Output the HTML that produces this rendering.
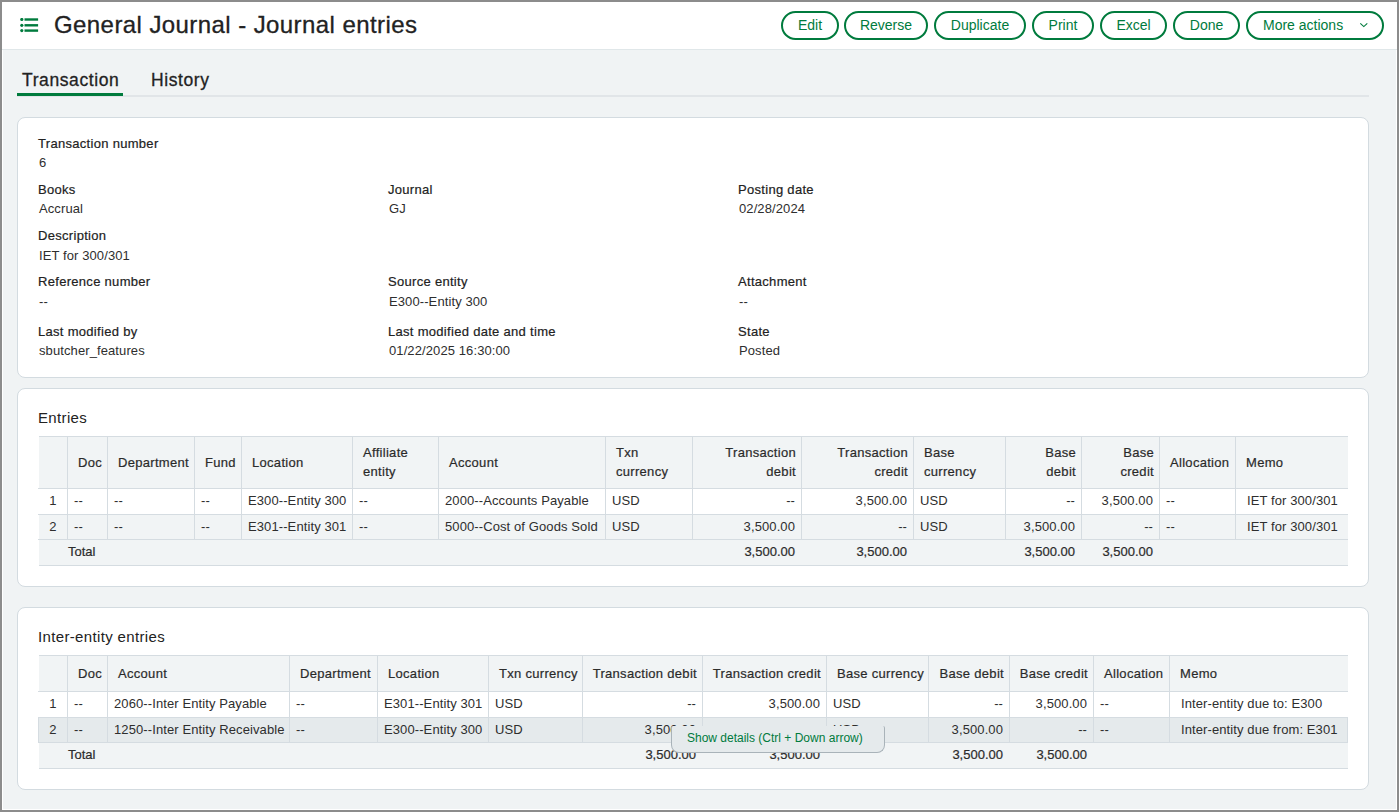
<!DOCTYPE html>
<html><head><meta charset="utf-8">
<style>
*{box-sizing:border-box;margin:0;padding:0}
html,body{width:1399px;height:812px;overflow:hidden}
body{font-family:"Liberation Sans",sans-serif;color:#222;background:#8c8c8c;position:relative;font-size:13px}
.a{position:absolute;white-space:nowrap}
#frame{position:absolute;left:2px;top:2px;width:1395px;height:808px;background:#fff}
#page{position:absolute;left:3px;top:2px;width:1393px;height:807px;background:#f0f3f4}
#hdr{position:absolute;left:2px;top:2px;width:1395px;height:48px;background:#fff;border-bottom:1px solid #e0e7e9}
.title{left:54px;top:11px;font-size:24px;line-height:28px;color:#222;letter-spacing:0.42px;-webkit-text-stroke:0.3px #222}
.btn{position:absolute;top:11px;height:29px;border:2px solid #007b3d;border-radius:15px;color:#007b3d;font-size:14px;line-height:25px;text-align:center;white-space:nowrap;background:#fff}
.tab{position:absolute;top:70px;font-size:17.5px;line-height:20px;color:#222;-webkit-text-stroke:0.3px #222;white-space:nowrap;letter-spacing:0.6px}
.card{position:absolute;left:17px;width:1352px;background:#fff;border:1px solid #d3dbe0;border-radius:8px}
.l{position:absolute;font-size:13px;line-height:15px;color:#222;-webkit-text-stroke:0.2px #222;white-space:nowrap;letter-spacing:0.3px}
.v{position:absolute;font-size:13px;line-height:15px;color:#2e2e2e;white-space:nowrap;letter-spacing:0.1px}
.sec{position:absolute;font-size:15px;line-height:17px;color:#222;white-space:nowrap;letter-spacing:0.35px}
.ln{position:absolute;background:#d5dce1}
.bg{position:absolute}
.t{position:absolute;font-size:13px;line-height:15px;color:#2e2e2e;white-space:nowrap;letter-spacing:0.1px}
.th{-webkit-text-stroke:0.2px #222;letter-spacing:0.3px}
.tt{-webkit-text-stroke:0.2px #222;letter-spacing:0px}
</style></head><body>
<div id="frame"></div><div id="page"></div><div id="hdr"></div>
<svg class="a" style="left:20px;top:18px" width="19" height="15" viewBox="0 0 19 15"><g fill="#007b3d"><circle cx="1.8" cy="1.5" r="1.6"/><circle cx="1.8" cy="7.3" r="1.6"/><circle cx="1.8" cy="12.6" r="1.6"/><rect x="4.5" y="0.3" width="13.6" height="2.4"/><rect x="4.5" y="6.1" width="13.6" height="2.4"/><rect x="4.5" y="11.4" width="13.6" height="2.4"/></g></svg>
<div class="a title">General Journal - Journal entries</div>
<div class="btn" style="left:781px;width:58px">Edit</div>
<div class="btn" style="left:844px;width:84px">Reverse</div>
<div class="btn" style="left:934px;width:92px">Duplicate</div>
<div class="btn" style="left:1032px;width:62px">Print</div>
<div class="btn" style="left:1100px;width:67px">Excel</div>
<div class="btn" style="left:1173px;width:67px">Done</div>
<div class="btn" style="left:1246px;width:138px;text-align:left;padding-left:15px">More actions</div>
<svg class="a" style="left:1359px;top:22px" width="10" height="6" viewBox="0 0 10 6"><path d="M1.3 1.3 L4.8 4.6 L8.3 1.3" fill="none" stroke="#007b3d" stroke-width="1.1"/></svg>
<div class="a" style="left:17px;top:95px;width:1352px;height:2px;background:#e1e5e8"></div>
<div class="a" style="left:17px;top:93px;width:106px;height:3px;background:#007b3d"></div>
<div class="tab" style="left:22px">Transaction</div>
<div class="tab" style="left:151px">History</div>
<div class="card" style="top:117px;height:261px"></div>
<div class="l" style="left:38px;top:136px">Transaction number</div>
<div class="v" style="left:39px;top:154.5px">6</div>
<div class="l" style="left:38px;top:182px">Books</div>
<div class="v" style="left:39px;top:201px">Accrual</div>
<div class="l" style="left:388px;top:182px">Journal</div>
<div class="v" style="left:389px;top:201px">GJ</div>
<div class="l" style="left:738px;top:182px">Posting date</div>
<div class="v" style="left:739px;top:201px">02/28/2024</div>
<div class="l" style="left:38px;top:228px">Description</div>
<div class="v" style="left:39px;top:247.5px">IET for 300/301</div>
<div class="l" style="left:38px;top:274px">Reference number</div>
<div class="v" style="left:39px;top:293.5px">--</div>
<div class="l" style="left:388px;top:274px">Source entity</div>
<div class="v" style="left:389px;top:293.5px">E300--Entity 300</div>
<div class="l" style="left:738px;top:274px">Attachment</div>
<div class="v" style="left:739px;top:293.5px">--</div>
<div class="l" style="left:38px;top:324px">Last modified by</div>
<div class="v" style="left:39px;top:343px">sbutcher_features</div>
<div class="l" style="left:388px;top:324px">Last modified date and time</div>
<div class="v" style="left:389px;top:343px">01/22/2025 16:30:00</div>
<div class="l" style="left:738px;top:324px">State</div>
<div class="v" style="left:739px;top:343px">Posted</div>
<div class="card" style="top:388px;height:199px"></div>
<div class="sec" style="left:38px;top:409px">Entries</div>
<div class="bg" style="left:39px;top:436px;width:1309px;height:52px;background:#f1f4f5"></div>
<div class="bg" style="left:39px;top:488px;width:1309px;height:26px;background:#fff"></div>
<div class="bg" style="left:39px;top:514px;width:1309px;height:25px;background:#f1f4f5"></div>
<div class="bg" style="left:39px;top:539px;width:1309px;height:26px;background:#f1f4f5"></div>
<div class="ln" style="left:39px;top:436px;width:1309px;height:1px"></div>
<div class="ln" style="left:38px;top:488px;width:1310px;height:1px"></div>
<div class="ln" style="left:38px;top:514px;width:1310px;height:1px"></div>
<div class="ln" style="left:38px;top:539px;width:1310px;height:1px"></div>
<div class="ln" style="left:39px;top:565px;width:1309px;height:1px"></div>
<div class="ln" style="left:67px;top:436px;width:1px;height:103px"></div>
<div class="ln" style="left:107px;top:436px;width:1px;height:103px"></div>
<div class="ln" style="left:194px;top:436px;width:1px;height:103px"></div>
<div class="ln" style="left:241px;top:436px;width:1px;height:103px"></div>
<div class="ln" style="left:352px;top:436px;width:1px;height:103px"></div>
<div class="ln" style="left:438px;top:436px;width:1px;height:103px"></div>
<div class="ln" style="left:605px;top:436px;width:1px;height:103px"></div>
<div class="ln" style="left:692px;top:436px;width:1px;height:103px"></div>
<div class="ln" style="left:801px;top:436px;width:1px;height:103px"></div>
<div class="ln" style="left:913px;top:436px;width:1px;height:103px"></div>
<div class="ln" style="left:1005px;top:436px;width:1px;height:103px"></div>
<div class="ln" style="left:1081px;top:436px;width:1px;height:103px"></div>
<div class="ln" style="left:1159px;top:436px;width:1px;height:103px"></div>
<div class="ln" style="left:1235px;top:436px;width:1px;height:103px"></div>
<div class="t th" style="left:78px;top:455.0px">Doc</div>
<div class="t th" style="left:118px;top:455.0px">Department</div>
<div class="t th" style="left:205px;top:455.0px">Fund</div>
<div class="t th" style="left:252px;top:455.0px">Location</div>
<div class="t th" style="left:363px;top:444.5px">Affiliate</div>
<div class="t th" style="left:363px;top:463.5px">entity</div>
<div class="t th" style="left:449px;top:455.0px">Account</div>
<div class="t th" style="left:616px;top:444.5px">Txn</div>
<div class="t th" style="left:616px;top:463.5px">currency</div>
<div class="t th" style="right:603px;top:444.5px;text-align:right">Transaction</div>
<div class="t th" style="right:603px;top:463.5px;text-align:right">debit</div>
<div class="t th" style="right:491px;top:444.5px;text-align:right">Transaction</div>
<div class="t th" style="right:491px;top:463.5px;text-align:right">credit</div>
<div class="t th" style="left:924px;top:444.5px">Base</div>
<div class="t th" style="left:924px;top:463.5px">currency</div>
<div class="t th" style="right:323px;top:444.5px;text-align:right">Base</div>
<div class="t th" style="right:323px;top:463.5px;text-align:right">debit</div>
<div class="t th" style="right:245px;top:444.5px;text-align:right">Base</div>
<div class="t th" style="right:245px;top:463.5px;text-align:right">credit</div>
<div class="t th" style="left:1170px;top:455.0px">Allocation</div>
<div class="t th" style="left:1246px;top:455.0px">Memo</div>
<div class="t" style="left:39px;width:28px;top:493.0px;text-align:center">1</div>
<div class="t" style="left:74px;top:493.0px">--</div>
<div class="t" style="left:114px;top:493.0px">--</div>
<div class="t" style="left:201px;top:493.0px">--</div>
<div class="t" style="left:248px;top:493.0px">E300--Entity 300</div>
<div class="t" style="left:359px;top:493.0px">--</div>
<div class="t" style="left:445px;top:493.0px">2000--Accounts Payable</div>
<div class="t" style="left:612px;top:493.0px">USD</div>
<div class="t" style="right:604px;top:493.0px;text-align:right">--</div>
<div class="t" style="right:492px;top:493.0px;text-align:right">3,500.00</div>
<div class="t" style="left:920px;top:493.0px">USD</div>
<div class="t" style="right:324px;top:493.0px;text-align:right">--</div>
<div class="t" style="right:246px;top:493.0px;text-align:right">3,500.00</div>
<div class="t" style="left:1166px;top:493.0px">--</div>
<div class="t" style="left:1247px;top:493.0px">IET for 300/301</div>
<div class="t" style="left:39px;width:28px;top:518.5px;text-align:center">2</div>
<div class="t" style="left:74px;top:518.5px">--</div>
<div class="t" style="left:114px;top:518.5px">--</div>
<div class="t" style="left:201px;top:518.5px">--</div>
<div class="t" style="left:248px;top:518.5px">E301--Entity 301</div>
<div class="t" style="left:359px;top:518.5px">--</div>
<div class="t" style="left:445px;top:518.5px">5000--Cost of Goods Sold</div>
<div class="t" style="left:612px;top:518.5px">USD</div>
<div class="t" style="right:604px;top:518.5px;text-align:right">3,500.00</div>
<div class="t" style="right:492px;top:518.5px;text-align:right">--</div>
<div class="t" style="left:920px;top:518.5px">USD</div>
<div class="t" style="right:324px;top:518.5px;text-align:right">3,500.00</div>
<div class="t" style="right:246px;top:518.5px;text-align:right">--</div>
<div class="t" style="left:1166px;top:518.5px">--</div>
<div class="t" style="left:1247px;top:518.5px">IET for 300/301</div>
<div class="t tt" style="left:68px;top:544.0px">Total</div>
<div class="t tt" style="right:604px;top:544.0px;text-align:right">3,500.00</div>
<div class="t tt" style="right:492px;top:544.0px;text-align:right">3,500.00</div>
<div class="t tt" style="right:324px;top:544.0px;text-align:right">3,500.00</div>
<div class="t tt" style="right:246px;top:544.0px;text-align:right">3,500.00</div>
<div class="card" style="top:607px;height:183px"></div>
<div class="sec" style="left:38px;top:628px">Inter-entity entries</div>
<div class="bg" style="left:39px;top:655px;width:1309px;height:36px;background:#f1f4f5"></div>
<div class="bg" style="left:39px;top:691px;width:1309px;height:26px;background:#fff"></div>
<div class="bg" style="left:38px;top:717px;width:1310px;height:26px;background:#e5eaec;border:1px solid #d5dce1"></div>
<div class="bg" style="left:39px;top:742px;width:1309px;height:26px;background:#f1f4f5"></div>
<div class="ln" style="left:39px;top:655px;width:1309px;height:1px"></div>
<div class="ln" style="left:38px;top:691px;width:1310px;height:1px"></div>
<div class="ln" style="left:38px;top:717px;width:1310px;height:1px"></div>
<div class="ln" style="left:38px;top:742px;width:1310px;height:1px"></div>
<div class="ln" style="left:39px;top:768px;width:1309px;height:1px"></div>
<div class="ln" style="left:67px;top:655px;width:1px;height:87px"></div>
<div class="ln" style="left:107px;top:655px;width:1px;height:87px"></div>
<div class="ln" style="left:289px;top:655px;width:1px;height:87px"></div>
<div class="ln" style="left:377px;top:655px;width:1px;height:87px"></div>
<div class="ln" style="left:488px;top:655px;width:1px;height:87px"></div>
<div class="ln" style="left:582px;top:655px;width:1px;height:87px"></div>
<div class="ln" style="left:702px;top:655px;width:1px;height:87px"></div>
<div class="ln" style="left:826px;top:655px;width:1px;height:87px"></div>
<div class="ln" style="left:928px;top:655px;width:1px;height:87px"></div>
<div class="ln" style="left:1009px;top:655px;width:1px;height:87px"></div>
<div class="ln" style="left:1093px;top:655px;width:1px;height:87px"></div>
<div class="ln" style="left:1169px;top:655px;width:1px;height:87px"></div>
<div class="t th" style="left:78px;top:666.0px">Doc</div>
<div class="t th" style="left:118px;top:666.0px">Account</div>
<div class="t th" style="left:300px;top:666.0px">Department</div>
<div class="t th" style="left:388px;top:666.0px">Location</div>
<div class="t th" style="left:499px;top:666.0px">Txn currency</div>
<div class="t th" style="right:702px;top:666.0px;text-align:right">Transaction debit</div>
<div class="t th" style="right:578px;top:666.0px;text-align:right">Transaction credit</div>
<div class="t th" style="left:837px;top:666.0px">Base currency</div>
<div class="t th" style="right:395px;top:666.0px;text-align:right">Base debit</div>
<div class="t th" style="right:311px;top:666.0px;text-align:right">Base credit</div>
<div class="t th" style="left:1104px;top:666.0px">Allocation</div>
<div class="t th" style="left:1180px;top:666.0px">Memo</div>
<div class="t" style="left:39px;width:28px;top:696.0px;text-align:center">1</div>
<div class="t" style="left:74px;top:696.0px">--</div>
<div class="t" style="left:114px;top:696.0px">2060--Inter Entity Payable</div>
<div class="t" style="left:296px;top:696.0px">--</div>
<div class="t" style="left:384px;top:696.0px">E301--Entity 301</div>
<div class="t" style="left:495px;top:696.0px">USD</div>
<div class="t" style="right:703px;top:696.0px;text-align:right">--</div>
<div class="t" style="right:579px;top:696.0px;text-align:right">3,500.00</div>
<div class="t" style="left:833px;top:696.0px">USD</div>
<div class="t" style="right:396px;top:696.0px;text-align:right">--</div>
<div class="t" style="right:312px;top:696.0px;text-align:right">3,500.00</div>
<div class="t" style="left:1100px;top:696.0px">--</div>
<div class="t" style="left:1181px;top:696.0px">Inter-entity due to: E300</div>
<div class="t" style="left:39px;width:28px;top:721.5px;text-align:center">2</div>
<div class="t" style="left:74px;top:721.5px">--</div>
<div class="t" style="left:114px;top:721.5px">1250--Inter Entity Receivable</div>
<div class="t" style="left:296px;top:721.5px">--</div>
<div class="t" style="left:384px;top:721.5px">E300--Entity 300</div>
<div class="t" style="left:495px;top:721.5px">USD</div>
<div class="t" style="right:703px;top:721.5px;text-align:right">3,500.00</div>
<div class="t" style="right:579px;top:721.5px;text-align:right">--</div>
<div class="t" style="left:833px;top:721.5px">USD</div>
<div class="t" style="right:396px;top:721.5px;text-align:right">3,500.00</div>
<div class="t" style="right:312px;top:721.5px;text-align:right">--</div>
<div class="t" style="left:1100px;top:721.5px">--</div>
<div class="t" style="left:1181px;top:721.5px">Inter-entity due from: E301</div>
<div class="t tt" style="left:68px;top:747.0px">Total</div>
<div class="t tt" style="right:703px;top:747.0px;text-align:right">3,500.00</div>
<div class="t tt" style="right:579px;top:747.0px;text-align:right">3,500.00</div>
<div class="t tt" style="right:396px;top:747.0px;text-align:right">3,500.00</div>
<div class="t tt" style="right:312px;top:747.0px;text-align:right">3,500.00</div>
<div class="a" style="left:671px;top:726px;width:214px;height:27px;background:#e5eaec;border:1px solid #a9b3b9;border-top:none;border-radius:2px 2px 8px 8px"></div>
<div class="a" style="left:687px;top:731px;font-size:12px;line-height:14px;color:#007b3d">Show details (Ctrl + Down arrow)</div>
</body></html>
